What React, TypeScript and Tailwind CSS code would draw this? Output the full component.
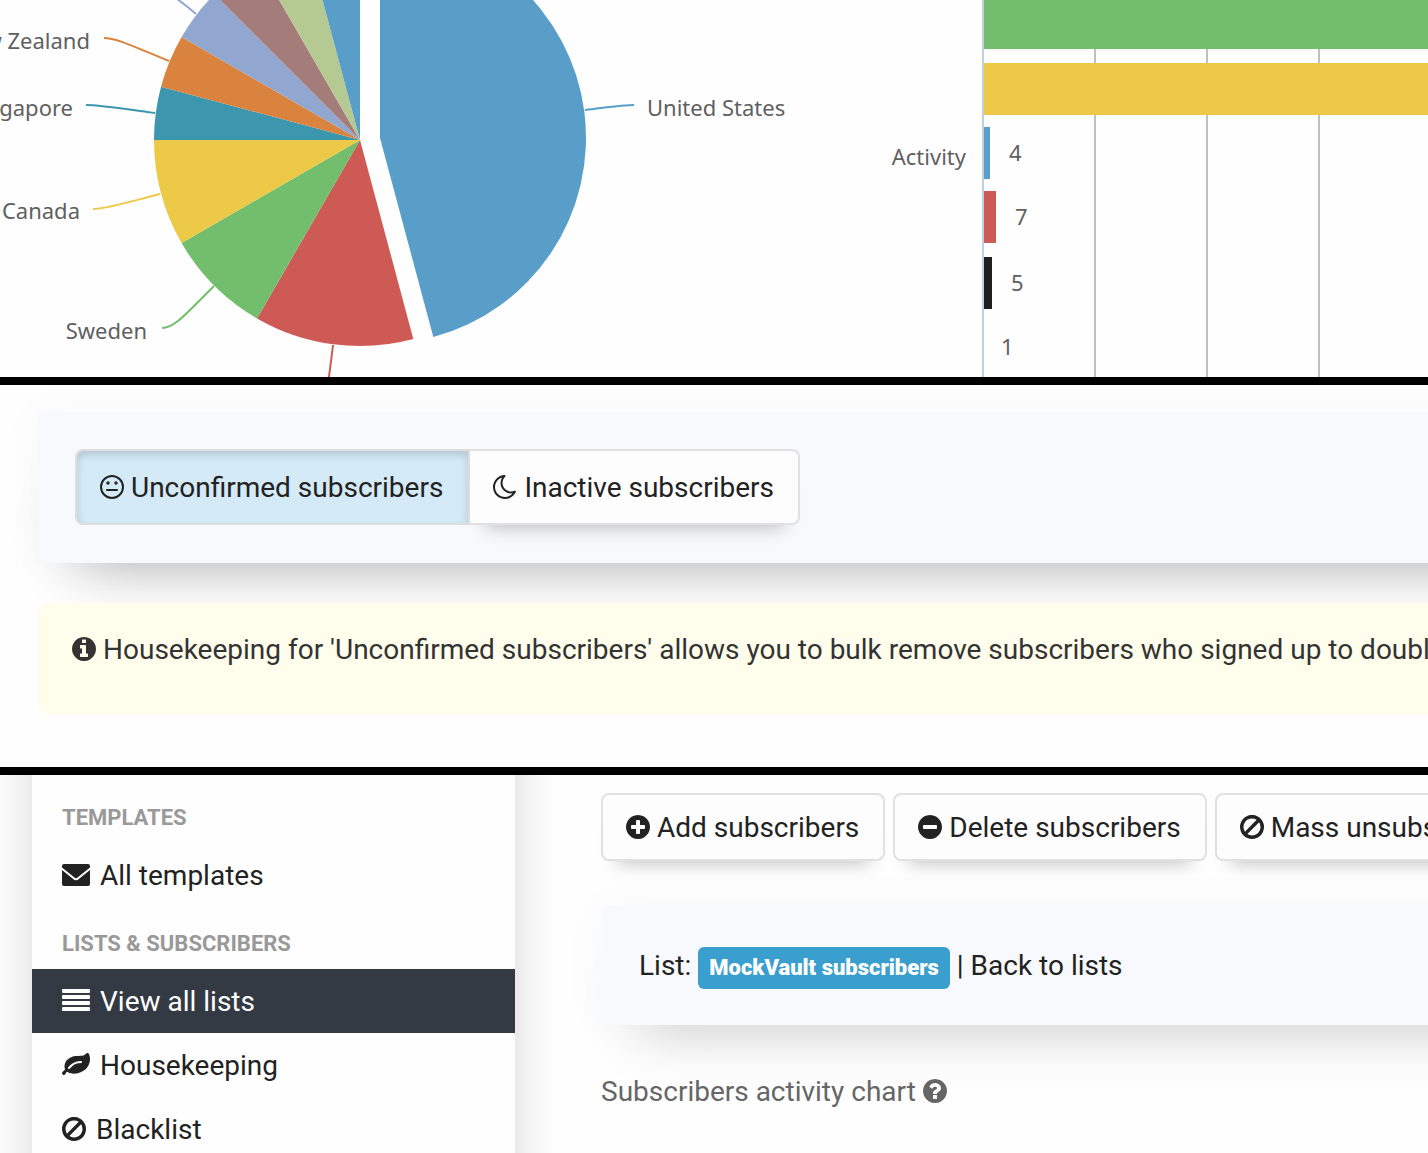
import type { ReactNode } from 'react'

/* ---------- icons ---------- */

const DISC =
  'm320-64q0 209-103 385.5t-279.5 279.5-385.5 103-385.5-103-279.5-279.5-103-385.5 103-385.5 279.5-279.5 385.5-103 385.5 103 279.5 279.5 103 385.5z'

const ICONS = {
  plus:
    'M1344 960v-128q0-26-19-45t-45-19h-256v-256q0-26-19-45t-45-19h-128q-26 0-45 19t-19 45v256h-256q-26 0-45 19t-19 45v128q0 26 19 45t45 19h256v256q0 26 19 45t45 19h128q26 0 45-19t19-45v-256h256q26 0 45-19t19-45z' +
    DISC,
  minus:
    'M1344 960v-128q0-26-19-45t-45-19h-768q-26 0-45 19t-19 45v128q0 26 19 45t45 19h768q26 0 45-19t19-45z' +
    DISC,
  ban: 'M1440 893q0-161-87-295l-754 753q137 89 297 89 111 0 211.5-43.5t173.5-116.5 116-174.5 43-212.5zm-999 299l755-754q-135-91-300-91-148 0-273 73t-198 199-73 274q0 162 89 299zm1223-299q0 157-61 300t-163.5 246-245 164-298.5 61-298.5-61-245-164-163.5-246-61-300 61-299.5 163.5-245.5 245-164 298.5-61 298.5 61 245 164 163.5 245.5 61 299.5z',
  info: 'M1152 1376v-160q0-14-9-23t-23-9h-96v-512q0-14-9-23t-23-9h-320q-14 0-23 9t-9 23v160q0 14 9 23t23 9h96v320h-96q-14 0-23 9t-9 23v160q0 14 9 23t23 9h448q14 0 23-9t9-23zm-128-896v-160q0-14-9-23t-23-9h-192q-14 0-23 9t-9 23v160q0 14 9 23t23 9h192q14 0 23-9t9-23zm640 416q0 209-103 385.5t-279.5 279.5-385.5 103-385.5-103-279.5-279.5-103-385.5 103-385.5 279.5-279.5 385.5-103 385.5 103 279.5 279.5 103 385.5z',
  question:
    'M1024 1376v-192q0-14-9-23t-23-9h-192q-14 0-23 9t-9 23v192q0 14 9 23t23 9h192q14 0 23-9t9-23zm256-672q0-88-55.5-163t-138.5-116-170-41q-243 0-371 213-15 24 8 42l132 100q7 6 19 6 16 0 25-12 53-68 86-92 34-24 86-24 48 0 85.5 26t37.5 59q0 38-20 61t-68 45q-63 28-115.5 86.5t-52.5 125.5v36q0 14 9 23t23 9h192q14 0 23-9t9-23q0-19 21.5-49.5t54.5-49.5q32-18 49-28.5t46-35 44.5-48 28-60.5 12.5-81zm384 192q0 209-103 385.5t-279.5 279.5-385.5 103-385.5-103-279.5-279.5-103-385.5 103-385.5 279.5-279.5 385.5-103 385.5 103 279.5 279.5 103 385.5z',
  moon: 'M1390 1303q-54 9-110 9-182 0-337-90t-245-245-90-337q0-192 104-357-201 60-328.5 229t-127.5 384q0 130 51 248.5t136.5 204 204 136.5 248.5 51q144 0 273.5-61.5t220.5-171.5zm203-85q-94 203-283.5 324.5t-413.5 121.5q-156 0-298-61t-245-164-164-245-61-298q0-153 57.5-292.5t156-241.5 235.5-164.5 290-68.5q44-2 61 39 18 41-15 72-86 78-131.5 181.5t-45.5 218.5q0 148 73 273t198 198 273 73q118 0 228-51 41-18 72 13 14 14 17.5 34t-4.5 38z',
  leaf: 'M1280 704q0-26-19-45t-45-19q-172 0-318 49.5t-259.5 134-235.5 219.5q-19 21-19 45 0 26 19 45t45 19q24 0 45-19 27-24 74-71t67-66q137-124 268.5-176t313.5-52q26 0 45-19t19-45zm512-198q0 95-20 193-46 224-184.5 383t-357.5 268q-214 108-438 108-148 0-286-47-15-5-88-42t-96-37q-16 0-39.5 32t-45 70-52.5 70-60 32q-43 0-63.5-17.5t-45.5-59.5q-2-4-6-11t-5.5-10-3-9.5-1.5-13.5q0-35 31-73.5t68-65.5 68-56 31-48q0-4-14-38t-16-44q-9-51-9-104 0-115 43.5-220t119-184.5 170.5-139 204-95.5q55-18 145-25.5t179.5-9 178.5-6 163.5-24 113.5-56.5l29.5-29.5 29.5-28 27-20 36.5-16 43.5-4.5q39 0 70.5 46t47.5 112 24 124 8 96z',
}

// round glyphs sit in a 1536 wide box, the leaf takes the full 1792
function Icon({ name }: { name: keyof typeof ICONS }) {
  if (name === 'leaf') {
    return (
      <svg viewBox="0 0 1792 1792" className="size-7 shrink-0 fill-current" aria-hidden="true">
        <path d={ICONS.leaf} />
      </svg>
    )
  }
  return (
    <svg viewBox="128 128 1536 1536" className="size-6 shrink-0 fill-current" aria-hidden="true">
      <path d={ICONS[name]} />
    </svg>
  )
}

function MehIcon() {
  return (
    <svg viewBox="0 0 24 24" className="size-6 shrink-0" aria-hidden="true">
      <circle cx="12" cy="12" r="11" fill="none" stroke="currentColor" strokeWidth="2" />
      <circle cx="8" cy="8" r="1.700" fill="currentColor" />
      <circle cx="16" cy="8" r="1.700" fill="currentColor" />
      <path d="M7 15h10" stroke="currentColor" strokeWidth="2" strokeLinecap="round" />
    </svg>
  )
}

function EnvelopeIcon() {
  return (
    <svg viewBox="0 0 28 28" className="size-7 shrink-0 fill-current" aria-hidden="true">
      <rect x="0" y="3" width="28" height="22" rx="2" />
      <path d="M-1 7L11.500 17q2.500 2.400 5 0L29 7" fill="none" stroke="#fefefe" strokeWidth="2" />
    </svg>
  )
}

function BarsIcon() {
  return (
    <svg viewBox="0 0 28 28" className="size-7 shrink-0 fill-current" aria-hidden="true">
      <rect x="0" y="2" width="28" height="4" rx="1" />
      <rect x="0" y="8" width="28" height="4" rx="1" />
      <rect x="0" y="14" width="28" height="4" rx="1" />
      <rect x="0" y="20" width="28" height="4" rx="1" />
    </svg>
  )
}

/* ---------- charts ---------- */

const RADIUS = 206

const slices = [
  { from: 0, to: 165, color: '#589ec9', cx: 380, cy: 138 },
  { from: 165, to: 210, color: '#ce5a55', cx: 360, cy: 140 },
  { from: 210, to: 240, color: '#72be6c', cx: 360, cy: 140 },
  { from: 240, to: 270, color: '#ecca48', cx: 360, cy: 140 },
  { from: 270, to: 285, color: '#3c96ae', cx: 360, cy: 140 },
  { from: 285, to: 300, color: '#da833e', cx: 360, cy: 140 },
  { from: 300, to: 315, color: '#92a7cf', cx: 360, cy: 140 },
  { from: 315, to: 330, color: '#a47d7b', cx: 360, cy: 140 },
  { from: 330, to: 345, color: '#b5ca92', cx: 360, cy: 140 },
  { from: 345, to: 360, color: '#589ec9', cx: 360, cy: 140 },
]

const connectors = [
  { d: 'M634 105C622 105 610 107 585 110', color: '#589ec9' },
  { d: 'M326 397C328 385 330 370 333 345', color: '#ce5a55' },
  { d: 'M162 328C174 328 184 316 214 286', color: '#72be6c' },
  { d: 'M93 209C105 209 125 203 160 194', color: '#ecca48' },
  { d: 'M86 105C98 105 118 108 155 113', color: '#3c96ae' },
  { d: 'M104 38C116 38 130 45 169 61', color: '#da833e' },
  { d: 'M164 -9C172 -5 180 0 196 14', color: '#92a7cf' },
]

const pieLabels = [
  { text: 'United States', x: 647, y: 116, anchor: 'start' as const },
  { text: 'Sweden', x: 147, y: 339, anchor: 'end' as const },
  { text: 'Canada', x: 80, y: 219, anchor: 'end' as const },
  { text: 'Singapore', x: 73, y: 116, anchor: 'end' as const },
  { text: 'New Zealand', x: 90, y: 49, anchor: 'end' as const },
]

function slicePath(s: (typeof slices)[number]) {
  const at = (deg: number) => {
    const a = (deg * Math.PI) / 180
    return `${s.cx + RADIUS * Math.sin(a)} ${s.cy - RADIUS * Math.cos(a)}`
  }
  return `M${s.cx} ${s.cy}L${at(s.from)}A${RADIUS} ${RADIUS} 0 0 1 ${at(s.to)}Z`
}

function CountryChart() {
  return (
    <svg
      className="h-full w-[850px] shrink-0 font-['Noto_Sans',sans-serif] text-[22px]"
      role="img"
      aria-label="Subscribers by country"
    >
      {slices.map((s) => (
        <path key={s.from} d={slicePath(s)} fill={s.color} />
      ))}
      {connectors.map((c) => (
        <path key={c.d} d={c.d} fill="none" stroke={c.color} strokeWidth="2" />
      ))}
      {pieLabels.map((l) => (
        <text key={l.text} x={l.x} y={l.y} textAnchor={l.anchor} fill="#606060">
          {l.text}
        </text>
      ))}
    </svg>
  )
}

const bars = [
  { y: -3, width: '100%', color: '#72be6c' },
  { y: 63, width: '100%', color: '#ecca48' },
  { y: 127, width: 6, color: '#589ec9', value: 4, labelX: 159 },
  { y: 191, width: 12, color: '#ce5a55', value: 7, labelX: 165 },
  { y: 257, width: 8, color: '#1f1f1f', value: 5, labelX: 161 },
  { y: 321, width: 0, color: '#92a7cf', value: 1, labelX: 151 },
]

function ActivityChart() {
  return (
    <svg
      className="h-full min-w-0 flex-1 font-['Noto_Sans',sans-serif] text-[22px]"
      role="img"
      aria-label="Campaign activity"
    >
      {[245, 357, 469, 581, 693, 805].map((x) => (
        <line key={x} x1={x} x2={x} y1="0" y2="100%" stroke="#c0c0c0" strokeWidth="2" />
      ))}
      <line x1="133" x2="133" y1="0" y2="100%" stroke="#c0d0e0" strokeWidth="2" />
      {bars.map((b) => (
        <g key={b.y}>
          <rect x="134" y={b.y} width={b.width} height="52" fill={b.color} />
          {b.value && (
            <text x={b.labelX} y={b.y + 34} fill="#606060">
              {b.value}
            </text>
          )}
        </g>
      ))}
      <text x="116" y="165" textAnchor="end" fill="#606060">
        Activity
      </text>
    </svg>
  )
}

/* ---------- page ---------- */

function ToolbarButton({ icon, children }: { icon: ReactNode; children: ReactNode }) {
  return (
    <button
      type="button"
      className="flex h-[68px] shrink-0 items-center gap-[7px] rounded-lg border-2 border-[#e1e1e1] bg-[#fdfdfd] pr-6 pl-[23px] whitespace-nowrap shadow-[0_18px_18px_-16px_rgba(0,0,0,0.25)]"
    >
      {icon}
      <span className="pt-[2px]">{children}</span>
    </button>
  )
}

function NavLink({ icon, active, children }: { icon: ReactNode; active?: boolean; children: ReactNode }) {
  return (
    <a
      href="#"
      className={
        active
          ? 'flex h-16 items-center gap-[10px] bg-[#343a43] px-[30px] text-white'
          : 'flex h-16 items-center gap-[10px] px-[30px]'
      }
    >
      {icon}
      <span className="pt-[2px]">{children}</span>
    </a>
  )
}

export default function App() {
  return (
    <div className="min-h-screen overflow-hidden bg-[#fefefe] font-['Roboto',sans-serif] text-[28px] leading-10 text-[#222]">
      <section className="flex h-[377px] overflow-hidden">
        <CountryChart />
        <ActivityChart />
      </section>

      {/* the panels run on past the right edge of the window */}
      <section className="h-[398px] overflow-hidden border-y-8 border-black pt-[27px] pl-[38px]">
        <div className="-mr-32 rounded-l-lg bg-[#f8f9fd] px-[37px] pt-[37px] pb-[38px] shadow-[0_0_50px_rgba(0,0,0,0.03),0_40px_60px_-40px_rgba(0,0,0,0.33)]">
          <div className="flex">
            <button
              type="button"
              aria-pressed="true"
              className="flex h-[76px] items-center gap-[7px] rounded-l-lg border-2 border-[#dedede] bg-[#d4eaf7] pr-[25px] pl-[23px] whitespace-nowrap shadow-[inset_0_4px_8px_rgba(0,0,0,0.15)]"
            >
              <MehIcon />
              <span className="pt-[2px]">Unconfirmed subscribers</span>
            </button>
            <button
              type="button"
              className="flex h-[76px] items-center gap-[7px] rounded-r-lg border-2 border-l-0 border-[#e1e1e1] bg-[#fdfdfd] pr-6 pl-[23px] whitespace-nowrap shadow-[0_18px_18px_-16px_rgba(0,0,0,0.25)]"
            >
              <Icon name="moon" />
              <span className="pt-[2px]">Inactive subscribers</span>
            </button>
          </div>
        </div>
        <div className="relative mt-10 flex h-[111px] items-start gap-[7px] rounded-l-lg bg-[#fffdec] pt-[26px] pl-[34px] whitespace-nowrap text-[#333]">
          <span className="flex h-10 items-center">
            <Icon name="info" />
          </span>
          <p className="leading-[42px]">
            Housekeeping for 'Unconfirmed subscribers' allows you to bulk remove subscribers who signed up to double
            opt-in lists
          </p>
        </div>
      </section>

      <section className="flex h-[378px] overflow-hidden pl-8">
        {/* the sidebar starts above and ends below the strip, so its shadow runs the full height */}
        <nav className="-my-12 w-[483px] shrink-0 bg-[#fefefe] pt-[71px] shadow-[0_0_44px_rgba(0,0,0,0.16)]">
          <h2 className="px-[30px] text-[22px] font-bold text-[#999]">TEMPLATES</h2>
          <div className="pt-[5px] pb-[17px]">
            <NavLink icon={<EnvelopeIcon />}>All templates</NavLink>
          </div>
          <h2 className="px-[30px] text-[22px] font-bold text-[#999]">LISTS &amp; SUBSCRIBERS</h2>
          <div className="pt-[5px]">
            <NavLink icon={<BarsIcon />} active>
              View all lists
            </NavLink>
            <NavLink icon={<Icon name="leaf" />}>Housekeeping</NavLink>
            <NavLink icon={<Icon name="ban" />}>Blacklist</NavLink>
          </div>
        </nav>

        <main className="min-w-0 flex-1 pt-[18px] pl-[86px]">
          <div className="flex gap-2">
            <ToolbarButton icon={<Icon name="plus" />}>Add subscribers</ToolbarButton>
            <ToolbarButton icon={<Icon name="minus" />}>Delete subscribers</ToolbarButton>
            <ToolbarButton icon={<Icon name="ban" />}>Mass unsubscribe</ToolbarButton>
          </div>
          <div className="-mr-32 mt-[45px] flex h-[119px] items-center gap-[7px] rounded-l-lg bg-[#f8f9fd] pl-[38px] whitespace-nowrap shadow-[0_0_50px_rgba(0,0,0,0.03),0_40px_60px_-40px_rgba(0,0,0,0.25)]">
            <span>List:</span>
            <span className="mt-1 flex h-[42px] items-center rounded-md bg-[#3a9fce] px-[11px] text-[22px] font-black text-white">
              MockVault subscribers
            </span>
            <span>
              | <a href="#">Back to lists</a>
            </span>
          </div>
          <p className="mt-[45px] flex items-center gap-[7px] text-[#666]">
            <span className="pt-[2px]">Subscribers activity chart</span>
            <Icon name="question" />
          </p>
        </main>
      </section>
    </div>
  )
}
